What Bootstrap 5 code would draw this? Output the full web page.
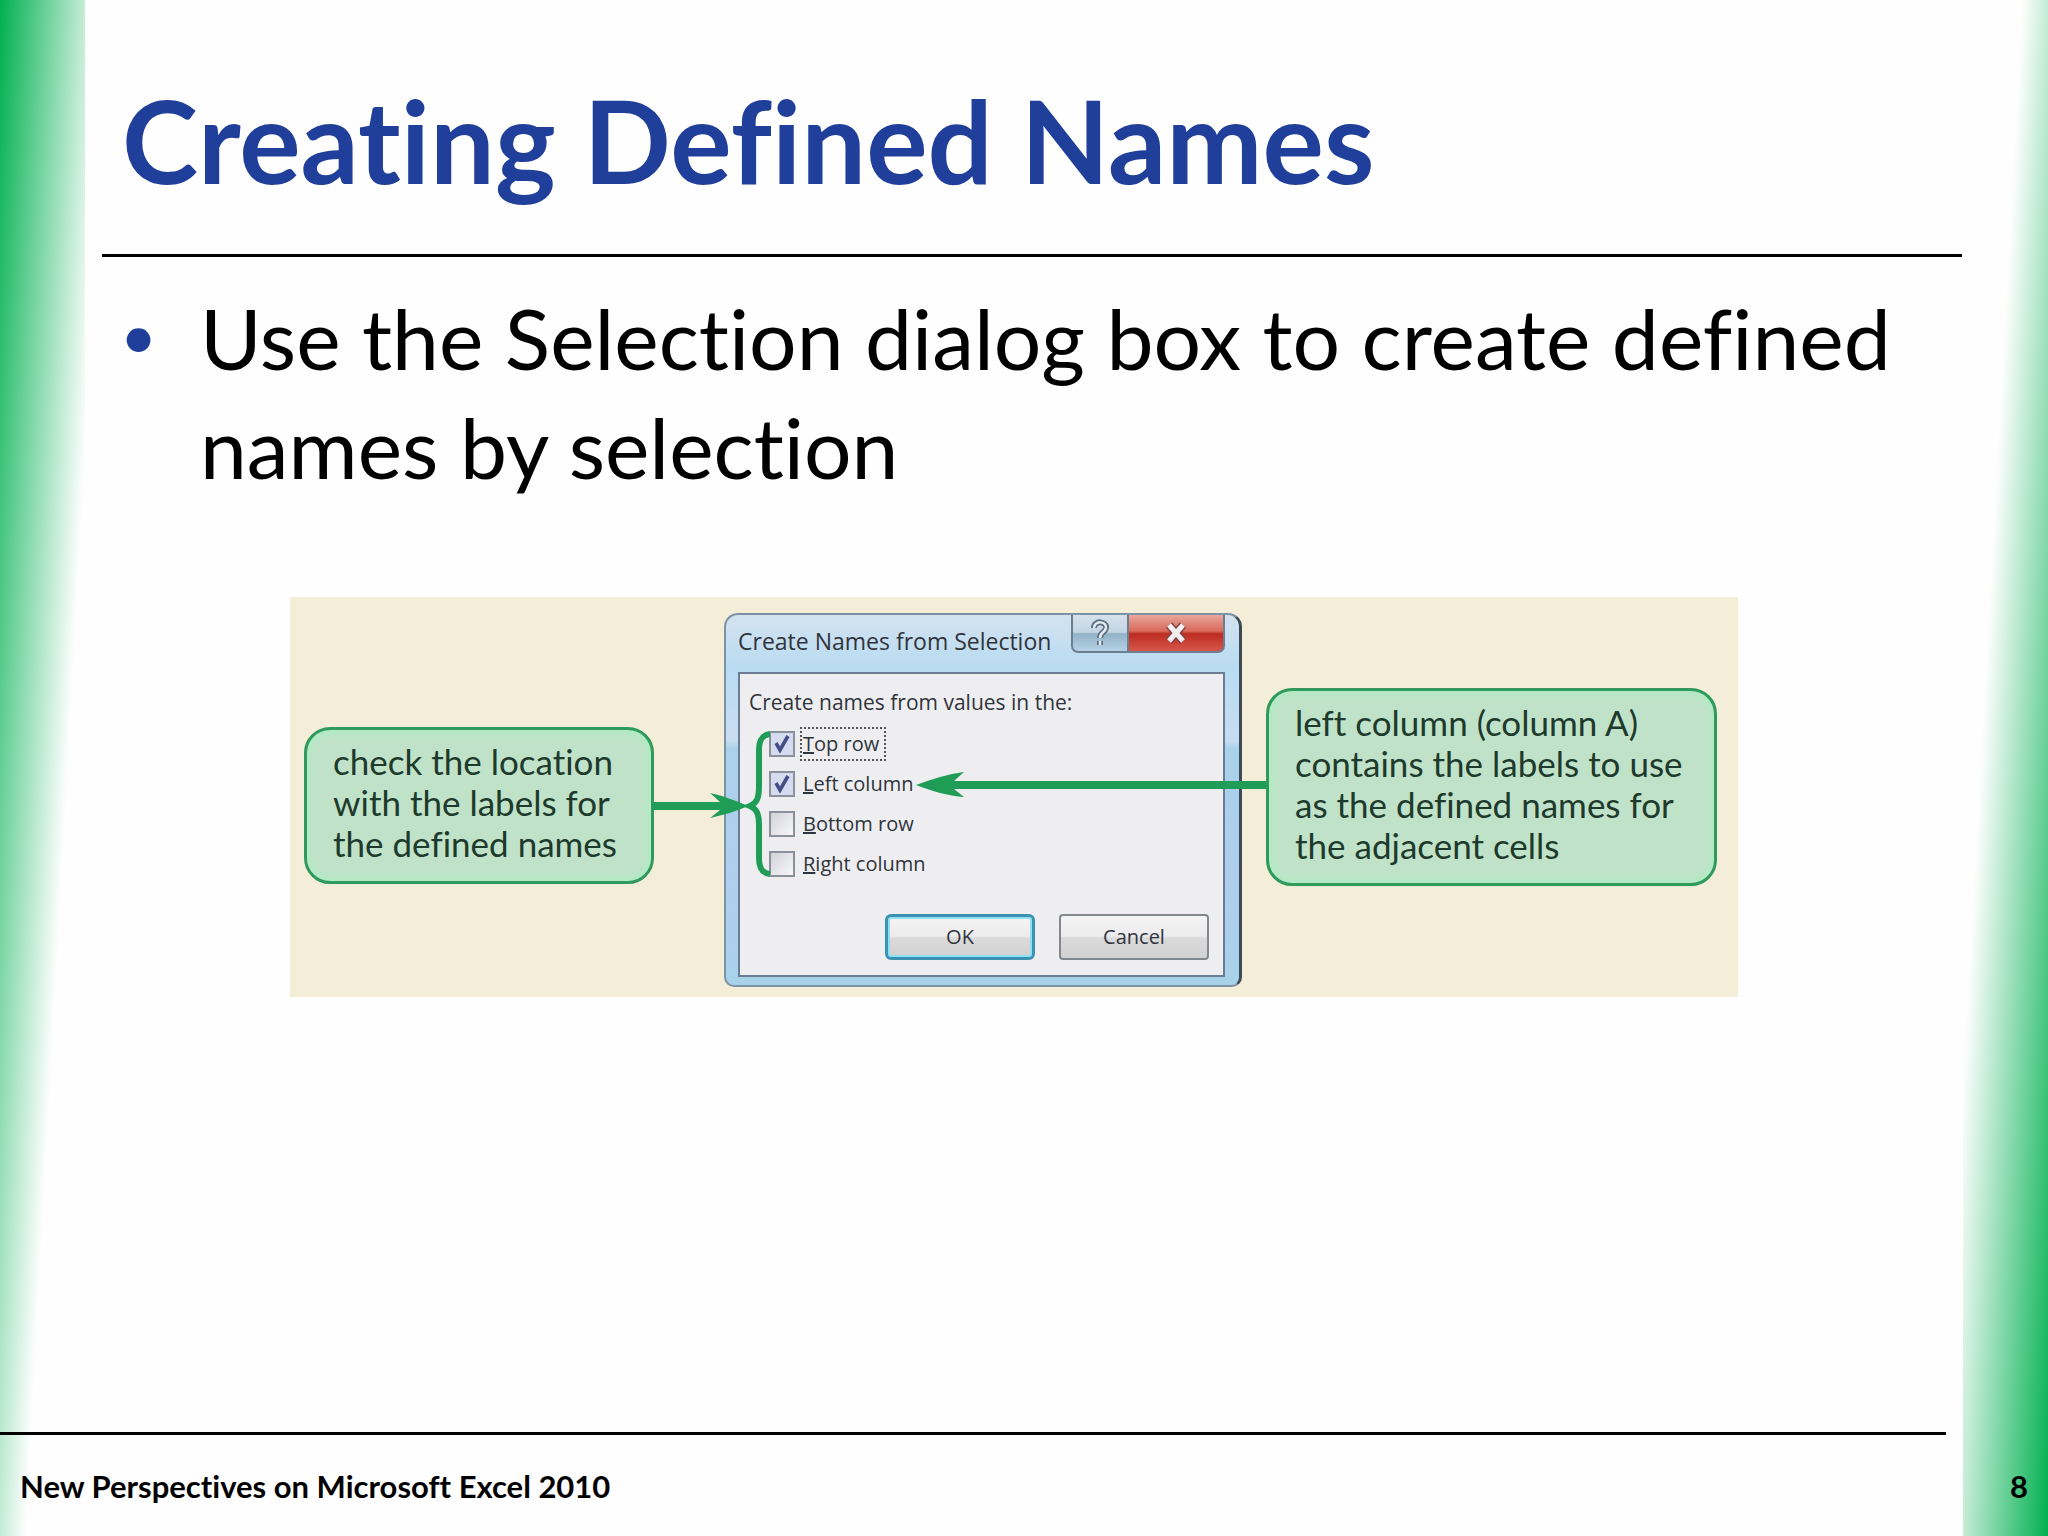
<!DOCTYPE html>
<html lang="en">
<head>
<meta charset="utf-8">
<meta name="viewport" content="width=device-width, initial-scale=1">
<title>Creating Defined Names</title>
<link href="https://cdn.jsdelivr.net/npm/bootstrap@5.3.0/dist/css/bootstrap.min.css" rel="stylesheet">
<style>
  body { font-family: Lato, "Open Sans", sans-serif; color: #000; background: #fefefe; font-variant-ligatures: none; }
  .slide {
    background:
      linear-gradient(to bottom right, #00b050, #fefefe 65%) left top / 85px 100% no-repeat,
      linear-gradient(to top left, #00b050, #fefefe 65%) right top / 85px 100% no-repeat;
  }
  .slide-head { margin: 0 86px 0 102px; padding: 73px 0 49px 20px; border-bottom: 3px solid #000; }
  .slide-title { font-size: 115px; line-height: 132px; font-weight: 700; color: #203f9a; }
  .slide-points { margin: 26px 86px 0 120px; font-size: 84px; line-height: 109px; }
  .slide-points li { display: flex; }
  .slide-points li::before { content: "•"; flex: 0 0 80px; font-size: 64px; line-height: 104px; color: #203f9a; }
  .slide-foot { font-size: 31px; line-height: 36px; font-weight: 700; }
  .foot-rule { margin-right: 102px; height: 3px; background: #000; }
  .foot-text { padding: 33px 20px 32px; }

  .shot { max-width: 1448px; margin: 96px auto 0 290px; padding: 16px 21px 10px 14px; background: #f4eed8; }
  .callout { border: 3px solid #2f9a5c; border-radius: 26px; background: #c0e2c8; color: #1d3a2c; font-size: 35px; line-height: 41px; white-space: nowrap; box-shadow: inset 0 0 8px 2px #a9efc0; }
  .callout-left { flex: 0 1 350px; margin-top: 114px; padding: 11px 0 17px 26px; }
  .callout-right { flex: 0 1 451px; margin-top: 75px; padding: 11px 0 17px 26px; }
  .dialog-win { flex: 0 1 518px; margin-left: 70px; margin-right: 24px; padding: 0 14px 8px 12px; border: 2px solid #7d93a5; border-right: 3px solid #3c4a56; border-radius: 14px 14px 10px 10px; background: linear-gradient(#d3e2ef, #b9dcf2 14%, #c8dcf0 34%, #a9d2ea 36%, #b0cdee 70%, #a8d2ea); font-family: "Open Sans", "Noto Sans", sans-serif; font-size: 20px; color: #30343c; }
  .win-title { font-size: 23px; line-height: 32px; padding-top: 10px; }
  .win-ctl { height: 38px; padding: 0; border: 2px solid #6c7f90; border-top: 0; display: flex; align-items: center; justify-content: center; }
  .win-help { width: 58px; border-radius: 0 0 0 7px; background: linear-gradient(#d5e2ec, #c3d4e2 48%, #94b2c8 52%, #b4d2e4); }
  .win-close { width: 96px; border-left: 0; border-radius: 0 0 7px 0; background: linear-gradient(#e8a79c, #d9685a 45%, #bd2c22 52%, #d8564a); }
  .win-body { margin-top: 15px; border: 2px solid #6c7c94; background: #eeeef0; padding: 7px 14px 15px 9px; }
  .win-legend { font-size: 21px; line-height: 43px; float: none; }
  .win-opt { display: flex; align-items: center; gap: 5px; height: 40px; padding-left: 20px; }
  .win-opt input { appearance: none; width: 26px; height: 26px; margin: 0; border: 2px solid #8b9199; background: linear-gradient(135deg, #d2d2da, #f7f7f9); }
  .win-opt input:checked { background: url("data:image/svg+xml,%3Csvg xmlns='http://www.w3.org/2000/svg' viewBox='0 0 22 22'%3E%3Cpath d='M5 10l4 7 8-14' fill='none' stroke='%23465088' stroke-width='3.6'/%3E%3C/svg%3E") center / 22px no-repeat, #d6dcf0; }
  .win-opt label { line-height: 30px; padding: 0 1px; border: 2px dotted transparent; }
  .win-opt .opt-focus { border-color: #555; padding-right: 5px; }
  .win-actions { margin-top: 30px; }
  .win-btn { width: 150px; height: 46px; padding: 0; font-size: 20px; line-height: 40px; color: #30343c; border: 2px solid #83888c; border-radius: 4px; background: linear-gradient(#f3f3f3, #ececec 48%, #dadada 52%, #d2d2d2); }
  .win-btn.is-default { border: 3px solid #3b93b4; border-radius: 6px; box-shadow: inset 0 0 0 2px #8fe0f5; }
  .arrows { position: absolute; left: 0; top: 0; pointer-events: none; }
</style>
</head>
<body>
<div class="slide d-flex flex-column min-vh-100">
  <header class="slide-head">
    <h1 class="slide-title m-0">Creating Defined Names</h1>
  </header>
  <main class="flex-grow-1">
    <ul class="slide-points list-unstyled mb-0">
      <li>Use the Selection dialog box to create defined names by selection</li>
    </ul>
    <section class="shot position-relative d-flex align-items-start">
      <div class="callout callout-left">check the location<br>with the labels for<br>the defined names</div>
      <form class="dialog-win">
        <div class="d-flex justify-content-between">
          <div class="win-title text-nowrap">Create Names from Selection</div>
          <div class="d-flex">
            <button type="button" class="win-ctl win-help" aria-label="Help">
              <svg width="20" height="28" viewBox="0 0 20 28" fill="none"><path d="M4 9c0-8 13-7 12 0-1 5-6 4-6 10M10 22v4" stroke="#5d6e80" stroke-width="6"/><path d="M4 9c0-8 13-7 12 0-1 5-6 4-6 10M10 22v4" stroke="#e6edf3" stroke-width="2.5"/></svg>
            </button>
            <button type="button" class="win-ctl win-close" aria-label="Close">
              <svg width="24" height="22" viewBox="0 0 24 22" fill="none"><path d="M5 3l14 16M19 3L5 19" stroke="#7d4646" stroke-width="8"/><path d="M5 3l14 16M19 3L5 19" stroke="#f4eeee" stroke-width="5"/></svg>
            </button>
          </div>
        </div>
        <div class="win-body">
          <fieldset>
            <legend class="win-legend mb-0 text-nowrap">Create names from values in the:</legend>
            <div class="win-opt"><input type="checkbox" id="top-row" checked><label class="opt-focus" for="top-row"><u>T</u>op row</label></div>
            <div class="win-opt"><input type="checkbox" id="left-col" checked><label for="left-col"><u>L</u>eft column</label></div>
            <div class="win-opt"><input type="checkbox" id="bottom-row"><label for="bottom-row"><u>B</u>ottom row</label></div>
            <div class="win-opt"><input type="checkbox" id="right-col"><label for="right-col"><u>R</u>ight column</label></div>
          </fieldset>
          <div class="win-actions d-flex justify-content-end gap-4">
            <button type="button" class="win-btn is-default">OK</button>
            <button type="button" class="win-btn">Cancel</button>
          </div>
        </div>
      </form>
      <div class="callout callout-right">left column (column A)<br>contains the labels to use<br>as the defined names for<br>the adjacent cells</div>
      <svg class="arrows" width="1448" height="399" viewBox="0 0 1448 399" aria-hidden="true">
        <g fill="#1f9d57">
          <path d="M362 205h68l-10-9c14 3 26 8 36 12h8v2h-8c-10 4-22 8-36 11l10-8h-68z"/>
          <path d="M976 184H664l10-9c-16 2-32 7-48 13 16 6 32 11 48 12l-10-8h312z"/>
        </g>
        <path d="M480 137c-8 1-11 6-11 16v36c0 12-2 17-9 20 7 3 9 8 9 20v32c0 10 3 15 11 16" fill="none" stroke="#1f9d57" stroke-width="6"/>
      </svg>
    </section>
  </main>
  <footer class="slide-foot">
    <div class="foot-rule"></div>
    <div class="foot-text d-flex justify-content-between">
      <span>New Perspectives on Microsoft Excel 2010</span>
      <span>8</span>
    </div>
  </footer>
</div>
<script src="https://cdn.jsdelivr.net/npm/bootstrap@5.3.0/dist/js/bootstrap.bundle.min.js"></script>
</body>
</html>
